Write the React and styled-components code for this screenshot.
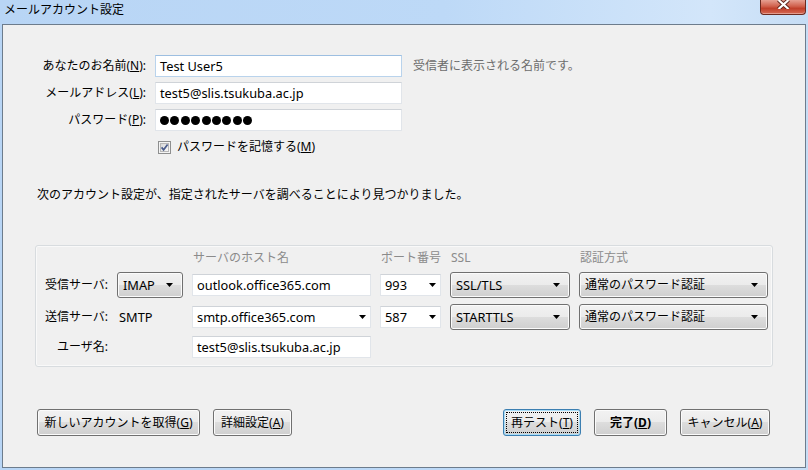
import React from 'react';
import styled, { createGlobalStyle } from 'styled-components';

const GlobalStyle = createGlobalStyle`
    html, body {
        margin: 0;
        padding: 0;
        background: #c3dbf3;
    }
    body {
        font-family: "Noto Sans", "Noto Sans CJK JP", sans-serif;
        font-size: 12px;
        color: #000;
    }
    * {
        box-sizing: border-box;
    }
`;

const Window = styled.div`
    width: 808px;
    height: 470px;
    display: flex;
    flex-direction: column;
    padding: 0 2px 2px 2px;
    background: linear-gradient(90deg, #b8d5f5 0%, #bdd9f7 55%, #d3e6fa 88%, #c6ddf5 100%);
`;

const TitleBar = styled.div`
    height: 24px;
    flex: 0 0 24px;
    display: flex;
    justify-content: space-between;
    align-items: flex-start;
`;

const Title = styled.div`
    padding-left: 2px;
    line-height: 20px;
    font-size: 12px;
    color: #000;
`;

const CloseButton = styled.div`
    width: 46px;
    height: 15px;
    display: flex;
    justify-content: center;
    align-items: flex-start;
    border: 1px solid #6b2a20;
    border-top: none;
    border-radius: 0 0 4px 4px;
    background: linear-gradient(#e6a092 0%, #d0604c 45%, #c0402b 60%, #d66a55 100%);
    box-shadow: inset 0 -1px 0 rgba(255, 255, 255, 0.35);
`;

const Client = styled.div`
    flex: 1;
    display: flex;
    flex-direction: column;
    border: 1px solid #6d7c8c;
    background: #f0f0f0;
    padding: 30px 32px 0 32px;
`;

const Form = styled.div`
    display: grid;
    grid-template-columns: 111px 247px auto;
    grid-auto-rows: 22px;
    column-gap: 9px;
    row-gap: 5px;
    align-items: center;
`;

const Label = styled.div`
    text-align: right;
    line-height: 16px;
    white-space: nowrap;
`;

const Hint = styled.div`
    margin-left: 2px;
    color: #6d6d6d;
    line-height: 16px;
    white-space: nowrap;
`;

const U = styled.span`
    text-decoration: underline;
`;

// latin values are set a little larger to match the width of the UI font
const TextBox = styled.div`
    height: 22px;
    width: 100%;
    display: flex;
    align-items: center;
    justify-content: space-between;
    padding: 0 4px;
    background: #fff;
    border: 1px solid ${p => (p.$active ? '#b9d3ec' : '#e1e5ea')};
    border-top-color: ${p => (p.$active ? '#9dbfe1' : '#cfd3d8')};
    font-size: 12.8px;
    line-height: 16px;
    white-space: nowrap;
`;

const Dots = styled.div`
    display: flex;
    gap: 1.4px;
`;

const Dot = styled.span`
    width: 9px;
    height: 9px;
    border-radius: 50%;
    background: #000;
`;

const CheckRow = styled.div`
    grid-column: 2 / span 2;
    display: flex;
    align-items: center;
    gap: 6px;
    padding-left: 3px;
    line-height: 16px;
`;

const Sentence = styled.div`
    margin: 29px 0 0 2px;
    line-height: 16px;
`;

const Group = styled.div`
    margin-top: 42px;
    display: grid;
    grid-template-columns: 72px 66px 179px 61px 120px 189px;
    grid-template-rows: 16px 26px 26px 22px;
    column-gap: 9px;
    row-gap: 6px;
    align-items: center;
    padding: 4px 0 8px 0;
    border: 1px solid #d8dcdf;
    border-radius: 3px;
    box-shadow: inset 0 0 0 1px #f9f9f9;
`;

const ColHead = styled.div`
    grid-column: ${p => p.$col};
    color: #8b8b8b;
    line-height: 16px;
    padding-left: 1px;
    white-space: nowrap;
`;

const RowLabel = styled.div`
    grid-column: 1;
    text-align: right;
    line-height: 16px;
    white-space: nowrap;
`;

const Plain = styled.div`
    padding-left: 2px;
    font-size: 12.8px;
    line-height: 16px;
`;

const DropButton = styled.div`
    height: 26px;
    display: flex;
    align-items: center;
    justify-content: space-between;
    padding: 0 9px 0 5px;
    border: 1px solid #707070;
    border-radius: 3px;
    background: linear-gradient(#f2f2f2 0%, #ebebeb 50%, #dddddd 50%, #cfcfcf 100%);
    box-shadow: inset 0 0 0 1px #fbfbfb;
    font-size: ${p => (p.$cjk ? '12px' : '12.8px')};
    line-height: 16px;
    white-space: nowrap;
`;

const Arrow = () => (
    <svg width="7" height="4" viewBox="0 0 7 4">
        <path d="M0 0H7L3.5 4Z" fill="#000" />
    </svg>
);

const ButtonBar = styled.div`
    margin-top: 42px;
    display: flex;
    justify-content: space-between;
    padding: 0 3px 0 2px;
`;

const ButtonGroup = styled.div`
    display: flex;
    gap: 13px;
`;

const Button = styled.div`
    width: ${p => p.$w}px;
    height: 27px;
    display: flex;
    align-items: center;
    justify-content: center;
    border: 1px solid ${p => (p.$focus ? '#3c7fb1' : '#707070')};
    border-radius: 3px;
    background: linear-gradient(#f2f2f2 0%, #ebebeb 50%, #dddddd 50%, #cfcfcf 100%);
    box-shadow: inset 0 0 0 1px ${p => (p.$focus ? '#a9def9' : '#fbfbfb')};
    outline: ${p => (p.$focus ? '1px dotted #000' : 'none')};
    outline-offset: -4px;
    font-weight: ${p => (p.$bold ? 700 : 400)};
    line-height: 16px;
    white-space: nowrap;
`;

const CheckBox = () => (
    <svg width="13" height="13" viewBox="0 0 13 13">
        <defs>
            <linearGradient id="cbg" x1="0" y1="0" x2="1" y2="1">
                <stop offset="0" stopColor="#d6d6d6" />
                <stop offset="1" stopColor="#fbfbfb" />
            </linearGradient>
        </defs>
        <rect x="0.5" y="0.5" width="12" height="12" fill="#f4f4f4" stroke="#8e8f8f" />
        <rect x="2.5" y="2.5" width="8" height="8" fill="url(#cbg)" stroke="#b8b8b8" />
        <path d="M3.6 6.4 L5.6 8.8 L9.6 3.6" fill="none" stroke="#4a5c8c" strokeWidth="1.7" />
    </svg>
);

const CloseGlyph = () => (
    <svg width="13" height="9" viewBox="0 -3 13 9">
        <path d="M1.5 -3 L11.5 6 M11.5 -3 L1.5 6" stroke="#5b2219" strokeWidth="4" />
        <path d="M1.5 -3 L11.5 6 M11.5 -3 L1.5 6" stroke="#fff" strokeWidth="2.2" />
    </svg>
);

export default function App() {
    return (
        <>
            <GlobalStyle />
            <Window>
                <TitleBar>
                    <Title>メールアカウント設定</Title>
                    <CloseButton>
                        <CloseGlyph />
                    </CloseButton>
                </TitleBar>
                <Client>
                    <Form>
                        <Label>あなたのお名前(<U>N</U>):</Label>
                        <TextBox $active>Test User5</TextBox>
                        <Hint>受信者に表示される名前です。</Hint>

                        <Label>メールアドレス(<U>L</U>):</Label>
                        <TextBox>test5@slis.tsukuba.ac.jp</TextBox>
                        <div />

                        <Label>パスワード(<U>P</U>):</Label>
                        <TextBox>
                            <Dots>
                                {Array.from({ length: 9 }).map((_, i) => (
                                    <Dot key={i} />
                                ))}
                            </Dots>
                        </TextBox>
                        <div />

                        <div />
                        <CheckRow>
                            <CheckBox />
                            <span>パスワードを記憶する(<U>M</U>)</span>
                        </CheckRow>
                    </Form>

                    <Sentence>
                        次のアカウント設定が、指定されたサーバを調べることにより見つかりました。
                    </Sentence>

                    <Group>
                        <ColHead $col={3}>サーバのホスト名</ColHead>
                        <ColHead $col={4}>ポート番号</ColHead>
                        <ColHead $col={5}>SSL</ColHead>
                        <ColHead $col={6}>認証方式</ColHead>

                        <RowLabel>受信サーバ:</RowLabel>
                        <DropButton>IMAP<Arrow /></DropButton>
                        <TextBox>outlook.office365.com</TextBox>
                        <TextBox>993<Arrow /></TextBox>
                        <DropButton>SSL/TLS<Arrow /></DropButton>
                        <DropButton $cjk>通常のパスワード認証<Arrow /></DropButton>

                        <RowLabel>送信サーバ:</RowLabel>
                        <Plain>SMTP</Plain>
                        <TextBox>smtp.office365.com<Arrow /></TextBox>
                        <TextBox>587<Arrow /></TextBox>
                        <DropButton>STARTTLS<Arrow /></DropButton>
                        <DropButton $cjk>通常のパスワード認証<Arrow /></DropButton>

                        <RowLabel>ユーザ名:</RowLabel>
                        <div />
                        <TextBox>test5@slis.tsukuba.ac.jp</TextBox>
                    </Group>

                    <ButtonBar>
                        <ButtonGroup>
                            <Button $w={163}>新しいアカウントを取得(<U>G</U>)</Button>
                            <Button $w={79}>詳細設定(<U>A</U>)</Button>
                        </ButtonGroup>
                        <ButtonGroup>
                            <Button $w={78} $focus>再テスト(<U>T</U>)</Button>
                            <Button $w={73} $bold>完了(<U>D</U>)</Button>
                            <Button $w={90}>キャンセル(<U>A</U>)</Button>
                        </ButtonGroup>
                    </ButtonBar>
                </Client>
            </Window>
        </>
    );
}
